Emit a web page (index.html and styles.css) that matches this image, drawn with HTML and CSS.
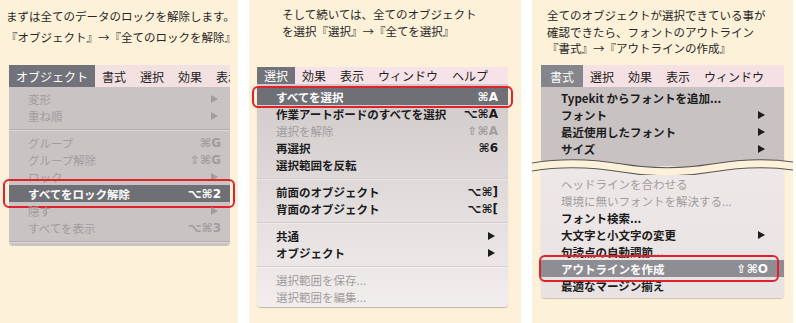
FILE: index.html
```html
<!DOCTYPE html>
<html lang="ja">
<head>
<meta charset="utf-8">
<title>アウトライン作成手順</title>
<link rel="stylesheet" href="styles.css">
</head>
<body>
<div class="page">
  <section class="panel p1">
    <p class="intro">まずは全てのデータのロックを解除します。<br>『オブジェクト』→『全てのロックを解除』</p>
    <div class="menu">
      <div class="menubar">
        <span class="mb-item active">オブジェクト</span>
        <span class="mb-item">書式</span>
        <span class="mb-item">選択</span>
        <span class="mb-item">効果</span>
        <span class="mb-item">表示</span>
      </div>
      <div class="body">
        <div class="row dis"><span>変形</span><i class="arrow"></i></div>
        <div class="row dis"><span>重ね順</span><i class="arrow"></i></div>
        <div class="sep"></div>
        <div class="row dis"><span>グループ</span><span class="sc">⌘G</span></div>
        <div class="row dis"><span>グループ解除</span><span class="sc">⇧⌘G</span></div>
        <div class="row dis"><span>ロック</span><i class="arrow"></i></div>
        <div class="row hl"><span>すべてをロック解除</span><span class="sc">⌥⌘2</span></div>
        <div class="row dis"><span>隠す</span><i class="arrow"></i></div>
        <div class="row dis"><span>すべてを表示</span><span class="sc">⌥⌘3</span></div>
        <div class="sep"></div>
      </div>
    </div>
  </section>

  <section class="panel p2">
    <p class="intro">そして続いては、全てのオブジェクト<br>を選択『選択』→『全てを選択』</p>
    <div class="menu">
      <div class="menubar">
        <span class="mb-item active">選択</span>
        <span class="mb-item">効果</span>
        <span class="mb-item">表示</span>
        <span class="mb-item">ウィンドウ</span>
        <span class="mb-item">ヘルプ</span>
      </div>
      <div class="body">
        <div class="row hl"><span>すべてを選択</span><span class="sc">⌘A</span></div>
        <div class="row"><span>作業アートボードのすべてを選択</span><span class="sc">⌥⌘A</span></div>
        <div class="row dis"><span>選択を解除</span><span class="sc">⇧⌘A</span></div>
        <div class="row"><span>再選択</span><span class="sc">⌘6</span></div>
        <div class="row"><span>選択範囲を反転</span></div>
        <div class="sep"></div>
        <div class="row"><span>前面のオブジェクト</span><span class="sc">⌥⌘]</span></div>
        <div class="row"><span>背面のオブジェクト</span><span class="sc">⌥⌘[</span></div>
        <div class="sep"></div>
        <div class="row"><span>共通</span><i class="arrow"></i></div>
        <div class="row"><span>オブジェクト</span><i class="arrow"></i></div>
        <div class="sep"></div>
        <div class="row dis"><span>選択範囲を保存...</span></div>
        <div class="row dis"><span>選択範囲を編集...</span></div>
      </div>
    </div>
  </section>

  <section class="panel p3">
    <p class="intro">全てのオブジェクトが選択できている事が<br>確認できたら、フォントのアウトライン<br>『書式』→『アウトラインの作成』</p>
    <div class="menu">
      <div class="menubar">
        <span class="mb-item active">書式</span>
        <span class="mb-item">選択</span>
        <span class="mb-item">効果</span>
        <span class="mb-item">表示</span>
        <span class="mb-item">ウィンドウ</span>
      </div>
      <div class="body">
        <div class="sec-top">
          <div class="row"><span>Typekit からフォントを追加...</span></div>
          <div class="row"><span>フォント</span><i class="arrow"></i></div>
          <div class="row"><span>最近使用したフォント</span><i class="arrow"></i></div>
          <div class="row"><span>サイズ</span><i class="arrow"></i></div>
        </div>
        <div class="break">
          <svg class="wave" viewBox="0 0 261 18" preserveAspectRatio="none" aria-hidden="true">
            <path d="M0,6 C30,1 60,2 90,7 S150,12 180,7 S240,2 261,5 L261,13 C240,10 210,10 180,15 S120,20 90,15 S30,9 0,14 Z" fill="#fdf2d9"/>
            <path d="M0,6 C30,1 60,2 90,7 S150,12 180,7 S240,2 261,5" fill="none" stroke="#5a5656" stroke-width="1.2"/>
            <path d="M0,14 C30,9 60,10 90,15 S150,20 180,15 S240,10 261,13" fill="none" stroke="#5a5656" stroke-width="1.2"/>
          </svg>
        </div>
        <div class="sec-bottom">
          <div class="row dis"><span>ヘッドラインを合わせる</span></div>
          <div class="row dis"><span>環境に無いフォントを解決する...</span></div>
          <div class="row"><span>フォント検索...</span></div>
          <div class="row"><span>大文字と小文字の変更</span><i class="arrow"></i></div>
          <div class="row"><span>句読点の自動調節...</span></div>
          <div class="row hl"><span>アウトラインを作成</span><span class="sc">⇧⌘O</span></div>
          <div class="row"><span>最適なマージン揃え</span></div>
        </div>
      </div>
    </div>
  </section>
</div>
</body>
</html>
```

FILE: styles.css
```css
* {
  box-sizing: border-box;
  margin: 0;
  padding: 0;
}

html, body {
  margin: 0;
  width: 796px;
  height: 323px;
  overflow: hidden;
  background: #ffffff;
  font-family: "Noto Sans CJK JP", "Noto Sans", sans-serif;
}

.page {
  display: flex;
  gap: 11px;
  height: 323px;
}

.panel {
  background: #fdf2d9;
  height: 323px;
  display: flex;
  flex-direction: column;
}

.p1 { width: 238px; }
.p2 { width: 272px; }
.p3 { width: 261px; }

.intro {
  font-size: 11.5px;
  color: #262626;
  white-space: nowrap;
}

.p1 .intro { padding: 6px 0 0 6px; line-height: 21px; }
.p2 .intro { padding: 6px 0 0 33px; line-height: 17px; }
.p3 .intro { padding: 7px 0 0 15px; line-height: 16.5px; }

.menu {
  display: flex;
  flex-direction: column;
}

.p1 .menu { margin: 17px 8px 0 9px; }
.p2 .menu { margin: 27px 13px 0 8px; }
.p3 .menu { margin: 8.5px 9px 0 9px; }

.menubar {
  display: flex;
  height: 22px;
  background: #f3e1e2;
  font-size: 12px;
  color: #222222;
  white-space: nowrap;
  overflow: hidden;
}

.p2 .menubar { height: 17px; background: #f7e3e7; }
.p3 .menubar { background: #f5e0e3; }

.mb-item {
  display: flex;
  align-items: center;
  padding: 0 7px;
}

.mb-item.active {
  background: #72727a;
  color: #ffffff;
}

.p3 .mb-item.active { background: #85858c; padding: 0 9px; }

.body {
  display: flex;
  flex-direction: column;
  border-radius: 0 0 4px 4px;
}

.p1 .body {
  background: #c9c3c3;
  padding-top: 3px;
}

.p2 .body {
  background: linear-gradient(#cfc9ca, #f3eeee);
  padding: 4px 0 2px;
  box-shadow: 0 1px 1px rgba(0, 0, 0, 0.25);
}

.p3 .body {
  box-shadow: 0 1px 1px rgba(0, 0, 0, 0.2);
}

.sec-top {
  background: #c8c2c3;
  padding-top: 2px;
}

.sec-bottom {
  background: linear-gradient(#eee7e7, #e9e2e2);
  padding-bottom: 4px;
  border-radius: 0 0 4px 4px;
}

.row {
  position: relative;
  display: flex;
  align-items: center;
  justify-content: space-between;
  height: 17px;
  padding: 0 9px 0 19px;
  font-size: 11.5px;
  font-weight: 700;
  color: #1c1c1c;
  white-space: nowrap;
}

.p2 .row { padding-right: 10px; }
.p3 .row { padding: 0 16px 0 20px; }

.row.dis {
  color: #a29c9d;
  font-weight: 400;
}

.row.hl {
  background: #6f6f76;
  color: #ffffff;
}

.p3 .row.hl { background: #8d8d93; }

.row.hl::after {
  content: "";
  position: absolute;
  border: 2px solid #e2222b;
  border-radius: 6px;
}

.p1 .row.hl::after { top: -6px; bottom: -6px; left: -6px; right: -5px; }
.p2 .row.hl::after { top: -2px; bottom: -3px; left: -5px; right: -5px; }
.p3 .row.hl::after { top: -5px; bottom: -5px; left: -2px; right: 5px; }

.sc {
  font-family: "DejaVu Sans", "Noto Sans CJK JP", sans-serif;
  font-size: 12px;
  font-weight: 700;
}

.arrow {
  width: 0;
  height: 0;
  border-left: 7px solid currentColor;
  border-top: 4px solid transparent;
  border-bottom: 4px solid transparent;
  margin-right: 3px;
}

.sep {
  height: 10px;
  display: flex;
  align-items: center;
}

.sep::before {
  content: "";
  flex: 1;
  height: 1px;
  background: #b3adad;
  box-shadow: 0 1px 0 rgba(255, 255, 255, 0.35);
}

.p2 .sep::before { background: #d3cdce; }

.break {
  height: 18px;
  background: linear-gradient(#c8c2c3 50%, #eee7e7 50%);
}

.wave {
  display: block;
  width: calc(100% + 18px);
  height: 18px;
  margin-left: -9px;
}
```
